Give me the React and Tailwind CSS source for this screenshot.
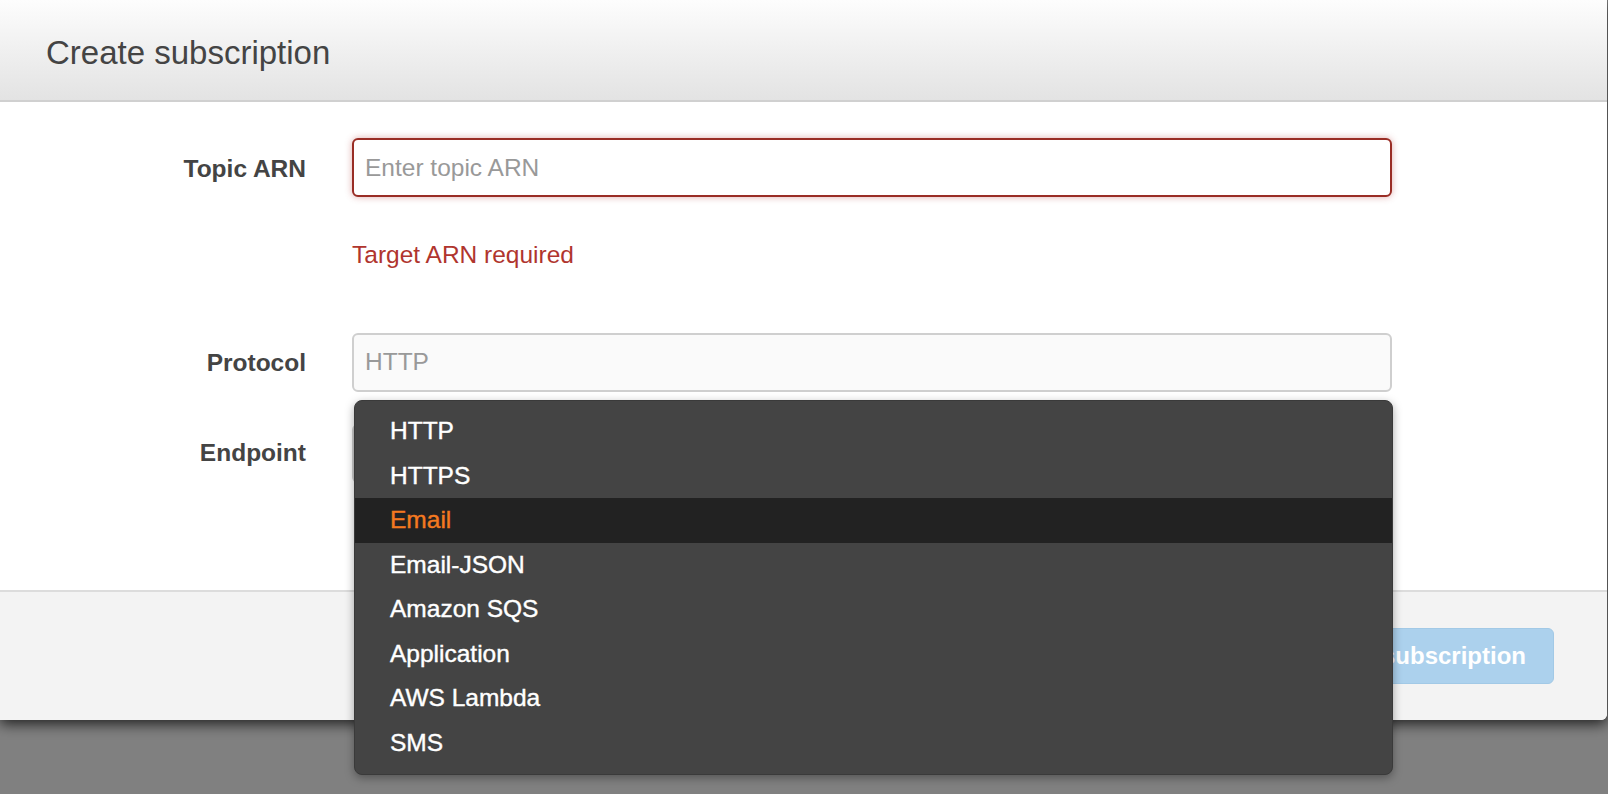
import { useState } from "react";

const protocols = ["HTTP", "HTTPS", "Email", "Email-JSON", "Amazon SQS", "Application", "AWS Lambda", "SMS"];

export default function App() {
  const [active] = useState("Email");

  return (
    <div className="h-[794px] w-full overflow-hidden bg-[#808080] font-['Liberation_Sans',Arial,sans-serif]">
      {/* Modal */}
      <div className="relative w-[1607px] rounded-br-[6px] bg-white shadow-[0_4px_14px_rgba(0,0,0,0.75)]">
        {/* Header */}
        <div className="flex h-[102px] items-center border-b-2 border-[#d0d0d0] bg-gradient-to-b from-[#fdfdfd] to-[#e3e3e3] px-[46px] pt-[4px]">
          <h1 className="text-[33px] leading-none text-[#444]">Create subscription</h1>
        </div>

        {/* Body */}
        <div className="grid grid-cols-[306px_1040px] gap-x-[46px] pt-[36px] pb-[107px] text-[24.5px]">
          <label className="flex h-[59px] items-center justify-end pt-[3px] font-bold text-[#444]">Topic ARN</label>
          <div>
            <input
              placeholder="Enter topic ARN"
              className="h-[59px] w-full rounded-[6px] border-2 border-[#992d25] bg-white px-[11px] text-[24.5px] text-[#333] shadow-[0_0_7px_rgba(185,74,72,0.45)] outline-none placeholder:text-[#999]"
            />
            <p className="mt-[44px] mb-[64px] text-[24.5px] leading-[28px] text-[#b0352e]">Target ARN required</p>
          </div>

          <label className="flex h-[59px] items-center justify-end pt-[2px] font-bold text-[#444]">Protocol</label>
          <div className="relative">
            <div className="flex h-[59px] items-center rounded-[6px] border-2 border-[#cfcfcf] bg-[#fafafa] px-[11px] text-[#999]">
              HTTP
            </div>

            {/* Dropdown menu */}
            <ul className="absolute top-[67px] left-[2px] z-10 w-[1039px] rounded-[8px] border border-[#3a3a3a] bg-[#444] py-[8px] shadow-[0_3px_10px_rgba(0,0,0,0.35)]">
              {protocols.map((p) => (
                <li
                  key={p}
                  className={
                    p === active
                      ? "flex h-[44.6px] items-center bg-[#222] pl-[35px] text-[24.5px] text-[#f47920] [-webkit-text-stroke:0.4px_#f47920]"
                      : "flex h-[44.6px] items-center pl-[35px] text-[24.5px] text-white [-webkit-text-stroke:0.4px_#ffffff]"
                  }
                >
                  {p}
                </li>
              ))}
            </ul>
          </div>

          <label className="mt-[32px] flex h-[59px] items-center justify-end font-bold text-[#444]">Endpoint</label>
          <div className="mt-[32px] h-[59px] rounded-[6px] border-2 border-[#cfcfcf] bg-white" />
        </div>

        {/* Footer */}
        <div className="flex h-[130px] items-center justify-end gap-4 rounded-br-[6px] border-t-2 border-[#dcdcdc] bg-[#f3f3f3] pr-[53px]">
          <button className="h-[48px] rounded-[6px] px-6 text-[24px] text-[#444]">Cancel</button>
          <button className="h-[56px] rounded-[6px] border border-[#a2c9e6] bg-[#acd1ed] px-[27px] text-[24px] font-bold text-white">
            Create subscription
          </button>
        </div>
      </div>
    </div>
  );
}
